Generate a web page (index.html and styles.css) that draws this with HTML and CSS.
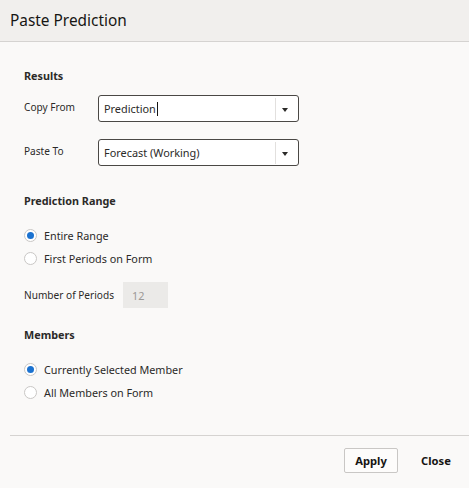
FILE: index.html
```html
<!DOCTYPE html>
<html>
<head>
<meta charset="utf-8">
<link rel="stylesheet" href="styles.css">
</head>
<body>
<div class="dialog">
  <div class="header"><span class="title">Paste Prediction</span></div>
  <div class="content">
    <div class="section-title">Results</div>
    <div class="row first">
      <span class="label">Copy From</span>
      <div class="select focused"><span class="value">Prediction<span class="caret"></span></span><span class="divider"></span><span class="arrow"></span></div>
    </div>
    <div class="row second">
      <span class="label">Paste To</span>
      <div class="select"><span class="value">Forecast (Working)</span><span class="divider"></span><span class="arrow"></span></div>
    </div>

    <div class="section-title range">Prediction Range</div>
    <div class="radios">
      <div class="radio-row"><span class="radio checked"></span><span>Entire Range</span></div>
      <div class="radio-row"><span class="radio"></span><span>First Periods on Form</span></div>
    </div>
    <div class="row periods">
      <span class="label wide">Number of Periods</span>
      <div class="num-input">12</div>
    </div>

    <div class="section-title members">Members</div>
    <div class="radios">
      <div class="radio-row"><span class="radio checked"></span><span>Currently Selected Member</span></div>
      <div class="radio-row"><span class="radio"></span><span>All Members on Form</span></div>
    </div>
  </div>
  <div class="footer">
    <button class="btn outlined">Apply</button>
    <button class="btn plain">Close</button>
  </div>
</div>
</body>
</html>
```

FILE: styles.css
```css
* { box-sizing: border-box; }
html, body {
  margin: 0;
  padding: 0;
  background: #faf9f8;
  font-family: "Noto Sans", "Open Sans", sans-serif;
  color: #161513;
}
.dialog {
  width: 469px;
  height: 488px;
  background: #faf9f8;
}
.header {
  height: 42px;
  background: #f1efed;
  border-bottom: 1px solid #d5d3d1;
  display: flex;
  align-items: center;
  padding-left: 10px;
}
.title {
  font-size: 15.4px;
  color: #161513;
  margin-top: -1px;
}
.content {
  padding: 26px 24px 0 24px;
}
.section-title {
  font-size: 10.8px;
  font-weight: 700;
  line-height: 16px;
  color: #2b2a28;
}
.row {
  display: flex;
  align-items: center;
}
.row.first { margin-top: 11px; }
.row.second { margin-top: 17px; }
.label {
  width: 74px;
  font-size: 10.1px;
  color: #2b2a28;
  margin-top: -3px;
}
.label.wide { width: 99px; margin-top: 0; }
.select {
  width: 201px;
  height: 27px;
  border: 1px solid #4a4845;
  border-radius: 3px;
  background: #fff;
  display: flex;
  align-items: center;
  position: relative;
}
.value {
  flex: 1;
  font-size: 10.9px;
  padding-left: 5px;
  color: #2b2a28;
  display: flex;
  align-items: center;
}
.caret {
  display: inline-block;
  width: 1px;
  height: 14px;
  background: #161513;
  margin-left: 1px;
}
.divider {
  width: 1px;
  height: 22px;
  background: #e2e0de;
}
.arrow {
  width: 22px;
  height: 100%;
  position: relative;
}
.arrow::after {
  content: "";
  position: absolute;
  left: 6px;
  top: 12px;
  border-left: 3.5px solid transparent;
  border-right: 3.5px solid transparent;
  border-top: 4px solid #2b2a28;
}
.section-title.range { margin-top: 27px; }
.section-title.members { margin-top: 19px; }
.radios {
  margin-top: 15px;
}
.radio-row {
  height: 23px;
  display: flex;
  align-items: center;
  font-size: 10.8px;
  color: #2b2a28;
}
.radio {
  width: 13px;
  height: 13px;
  border: 1px solid #c9c7c5;
  border-radius: 50%;
  background: #fff;
  margin-right: 7px;
  display: flex;
  align-items: center;
  justify-content: center;
}
.radio.checked::after {
  content: "";
  width: 7px;
  height: 7px;
  border-radius: 50%;
  background: #1b72d0;
}
.row.periods { margin-top: 12px; }
.num-input {
  width: 45px;
  height: 26px;
  background: #ebeae8;
  font-size: 10.9px;
  color: #9b9996;
  display: flex;
  align-items: center;
  padding-left: 9px;
}
.footer {
  margin-top: 31px;
  margin-left: 10px;
  border-top: 1px solid #d5d3d1;
  display: flex;
  justify-content: flex-end;
  align-items: center;
  padding: 12px 10px 0 0;
}
.btn {
  font-family: inherit;
  font-size: 11.2px;
  font-weight: 700;
  color: #161513;
  height: 25px;
  background: transparent;
  cursor: pointer;
}
.btn.outlined {
  width: 54px;
  border: 1px solid #c9c7c5;
  border-radius: 2px;
  background: #fdfcfb;
}
.btn.plain {
  border: none;
  width: 46px;
  margin-left: 15px;
  padding: 0;
}
```
